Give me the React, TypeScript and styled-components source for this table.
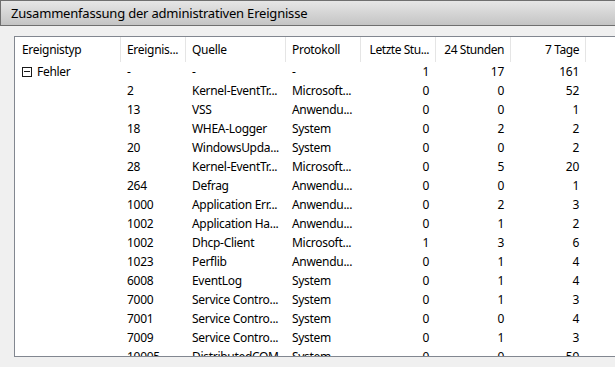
import styled, { createGlobalStyle } from "styled-components";

type Row = {
  type?: string;
  id: string;
  source: string;
  log: string;
  hour: string;
  day: string;
  week: string;
};

const rows: Row[] = [
  { type: "Fehler", id: "-", source: "-", log: "-", hour: "1", day: "17", week: "161" },
  { id: "2", source: "Kernel-EventTr...", log: "Microsoft...", hour: "0", day: "0", week: "52" },
  { id: "13", source: "VSS", log: "Anwendu...", hour: "0", day: "0", week: "1" },
  { id: "18", source: "WHEA-Logger", log: "System", hour: "0", day: "2", week: "2" },
  { id: "20", source: "WindowsUpda...", log: "System", hour: "0", day: "0", week: "2" },
  { id: "28", source: "Kernel-EventTr...", log: "Microsoft...", hour: "0", day: "5", week: "20" },
  { id: "264", source: "Defrag", log: "Anwendu...", hour: "0", day: "0", week: "1" },
  { id: "1000", source: "Application Err...", log: "Anwendu...", hour: "0", day: "2", week: "3" },
  { id: "1002", source: "Application Ha...", log: "Anwendu...", hour: "0", day: "1", week: "2" },
  { id: "1002", source: "Dhcp-Client", log: "Microsoft...", hour: "1", day: "3", week: "6" },
  { id: "1023", source: "Perflib", log: "Anwendu...", hour: "0", day: "1", week: "4" },
  { id: "6008", source: "EventLog", log: "System", hour: "0", day: "1", week: "4" },
  { id: "7000", source: "Service Contro...", log: "System", hour: "0", day: "1", week: "3" },
  { id: "7001", source: "Service Contro...", log: "System", hour: "0", day: "0", week: "4" },
  { id: "7009", source: "Service Contro...", log: "System", hour: "0", day: "1", week: "3" },
  { id: "10005", source: "DistributedCOM", log: "System", hour: "0", day: "0", week: "59" },
];

const GlobalStyle = createGlobalStyle`
  body {
    margin: 0;
    background: #f0f0f0;
    font-family: "Noto Sans", "Open Sans", sans-serif;
    color: #000;
  }
`;

const Page = styled.div`
  width: 615px;
  height: 367px;
  overflow: hidden;
  background: #f0f0f0;
`;

const TitleBar = styled.div`
  height: 24px;
  width: 640px;
  border: 1px solid #6f6f6f;
  background: linear-gradient(#e6e6e6, #c4c4c4);
  display: flex;
  align-items: center;
  padding-left: 10px;
  font-size: 13px;
  letter-spacing: -0.2px;
`;

const Content = styled.div`
  padding: 10px 0 0 14px;
`;

const ListBox = styled.div`
  width: 640px;
  height: 319px;
  background: #fff;
  border: 1px solid #828790;
  overflow: hidden;
  font-size: 12px;
  letter-spacing: -0.3px;
`;

const Grid = styled.div<{ $height: number }>`
  display: grid;
  grid-template-columns: 106px 65px 100px 75px 75px 75px 75px;
  height: ${(p) => p.$height}px;
`;

const HeadCell = styled.div<{ $right?: boolean }>`
  display: flex;
  align-items: center;
  justify-content: ${(p) => (p.$right ? "flex-end" : "flex-start")};
  padding: ${(p) => (p.$right ? "0 6px 0 0" : "0 2px 0 6px")};
  border-right: 1px solid #e5e5e5;
  white-space: nowrap;
  overflow: hidden;
  letter-spacing: ${(p) => (p.$right ? "-0.45px" : "-0.3px")};
`;

const Cell = styled.div<{ $right?: boolean }>`
  display: flex;
  align-items: center;
  justify-content: ${(p) => (p.$right ? "flex-end" : "flex-start")};
  padding: 0 7px 0 6px;
  white-space: nowrap;
  overflow: hidden;
`;

const GroupCell = styled(Cell)`
  gap: 5px;
  padding-left: 7px;
`;

const MinusBox = styled.span`
  box-sizing: border-box;
  width: 10px;
  height: 10px;
  border: 1px solid #1a1a1a;
  position: relative;
  flex-shrink: 0;

  &::after {
    content: "";
    position: absolute;
    left: 1px;
    right: 1px;
    top: 3px;
    height: 1px;
    background: #1a1a1a;
  }
`;

export default function App() {
  return (
    <Page>
      <GlobalStyle />
      <TitleBar>Zusammenfassung der administrativen Ereignisse</TitleBar>
      <Content>
        <ListBox>
          <Grid $height={25}>
            <HeadCell style={{ paddingLeft: 7 }}>Ereignistyp</HeadCell>
            <HeadCell>Ereignis...</HeadCell>
            <HeadCell>Quelle</HeadCell>
            <HeadCell>Protokoll</HeadCell>
            <HeadCell $right>Letzte Stu...</HeadCell>
            <HeadCell $right>24 Stunden</HeadCell>
            <HeadCell $right>7 Tage</HeadCell>
          </Grid>
          {rows.map((r, i) => (
            <Grid key={i} $height={19}>
              {r.type ? (
                <GroupCell>
                  <MinusBox />
                  {r.type}
                </GroupCell>
              ) : (
                <Cell />
              )}
              <Cell>{r.id}</Cell>
              <Cell>{r.source}</Cell>
              <Cell>{r.log}</Cell>
              <Cell $right>{r.hour}</Cell>
              <Cell $right>{r.day}</Cell>
              <Cell $right>{r.week}</Cell>
            </Grid>
          ))}
        </ListBox>
      </Content>
    </Page>
  );
}
